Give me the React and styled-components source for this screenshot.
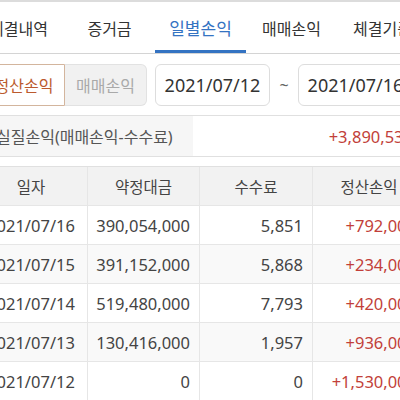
import React from "react";
import styled, { createGlobalStyle } from "styled-components";

const GlobalStyle = createGlobalStyle`
  html, body {
    margin: 0;
    padding: 0;
    background: #ffffff;
    overflow: hidden;
  }
  body {
    font-family: "Noto Sans", "Noto Sans CJK KR", sans-serif;
    color: #333333;
  }
`;

const Page = styled.div`
  width: 450px;
  margin-left: -25px;
  border-top: 2px solid #dcdcdc;
`;

const TabBar = styled.div`
  display: flex;
  height: 51px;
  margin-left: -2px;
  border-bottom: 1px solid #d4d4d4;
`;

const Tab = styled.div`
  flex: 0 0 91px;
  display: flex;
  align-items: center;
  justify-content: center;
  font-size: ${({ active }) => (active ? "17px" : "16px")};
  color: ${({ active }) => (active ? "#3473c2" : "#333333")};
  white-space: nowrap;
  box-shadow: ${({ active }) => (active ? "inset 0 -3px 0 #3473c2" : "none")};
`;

const FilterRow = styled.div`
  display: flex;
  align-items: center;
  height: 42px;
  margin-top: 10px;
  padding-left: 8px;
`;

const Segment = styled.div`
  display: flex;
  height: 42px;
  margin-right: 8px;
`;

const SegButton = styled.div`
  width: 82px;
  box-sizing: border-box;
  display: flex;
  align-items: center;
  justify-content: center;
  font-size: 16px;
  white-space: nowrap;
  color: ${({ selected }) => (selected ? "#bb5a2e" : "#a9a9a9")};
  background: ${({ selected }) => (selected ? "#ffffff" : "#f1f1f1")};
  border: 1px solid ${({ selected }) => (selected ? "#d3b59d" : "#e2e2e2")};
  border-radius: ${({ selected }) => (selected ? "6px 0 0 6px" : "0 6px 6px 0")};
  ${({ selected }) => (selected ? "" : "border-left: none;")}
`;

const DateBox = styled.div`
  width: 115px;
  height: 42px;
  box-sizing: border-box;
  flex: 0 0 auto;
  display: flex;
  align-items: center;
  justify-content: center;
  border: 1px solid #dddddd;
  border-radius: 6px;
  font-size: 18px;
  color: #333333;
  white-space: nowrap;
`;

const Tilde = styled.div`
  width: 28px;
  text-align: center;
  font-size: 16px;
  color: #666666;
`;

const Summary = styled.div`
  display: flex;
  height: 42px;
  margin-top: 9px;
  border-top: 1px solid #e0e0e0;
  border-bottom: 1px solid #e0e0e0;
  box-sizing: border-box;
`;

const SummaryLabel = styled.div`
  flex: 0 0 auto;
  width: 218px;
  padding-left: 21px;
  box-sizing: border-box;
  display: flex;
  align-items: center;
  background: #f6f6f6;
  font-size: 16px;
  color: #555555;
  white-space: nowrap;
`;

const SummaryValue = styled.div`
  flex: 1;
  display: flex;
  align-items: center;
  justify-content: flex-end;
  padding-right: 12px;
  font-size: 16.5px;
  color: #c23f3a;
`;

const Table = styled.div`
  margin-top: 9px;
  border-top: 1px solid #e0e0e0;
`;

const Row = styled.div`
  display: grid;
  grid-template-columns: 112px 112px 113px 113px;
  height: 39px;
  box-sizing: border-box;
  border-bottom: 1px solid #e6e6e6;
  background: ${({ head, striped }) => (head ? "#f2f2f2" : striped ? "#f9f9f9" : "#ffffff")};
`;

const Cell = styled.div`
  display: flex;
  align-items: center;
  justify-content: ${({ align }) => (align === "right" ? "flex-end" : "center")};
  padding-right: ${({ align }) => (align === "right" ? "9px" : "0")};
  border-left: ${({ first }) => (first ? "none" : "1px solid #e6e6e6")};
  font-size: ${({ head }) => (head ? "15.5px" : "16.5px")};
  color: ${({ red }) => (red ? "#c23f3a" : "#444444")};
  white-space: nowrap;
`;

const rows = [
  { date: "2021/07/16", amount: "390,054,000", fee: "5,851", profit: "+792,000" },
  { date: "2021/07/15", amount: "391,152,000", fee: "5,868", profit: "+234,000" },
  { date: "2021/07/14", amount: "519,480,000", fee: "7,793", profit: "+420,000" },
  { date: "2021/07/13", amount: "130,416,000", fee: "1,957", profit: "+936,000" },
  { date: "2021/07/12", amount: "0", fee: "0", profit: "+1,530,000" },
];

const tabs = ["체결내역", "증거금", "일별손익", "매매손익", "체결기준"];

export default function App() {
  return (
    <Page>
      <GlobalStyle />
      <TabBar>
        {tabs.map((t) => (
          <Tab key={t} active={t === "일별손익"}>
            {t}
          </Tab>
        ))}
      </TabBar>
      <FilterRow>
        <Segment>
          <SegButton selected>정산손익</SegButton>
          <SegButton>매매손익</SegButton>
        </Segment>
        <DateBox>2021/07/12</DateBox>
        <Tilde>~</Tilde>
        <DateBox>2021/07/16</DateBox>
      </FilterRow>
      <Summary>
        <SummaryLabel>실질손익(매매손익-수수료)</SummaryLabel>
        <SummaryValue>+3,890,530</SummaryValue>
      </Summary>
      <Table>
        <Row head>
          <Cell head first>일자</Cell>
          <Cell head>약정대금</Cell>
          <Cell head>수수료</Cell>
          <Cell head>정산손익</Cell>
        </Row>
        {rows.map((r, i) => (
          <Row key={r.date} striped={i % 2 === 1}>
            <Cell first>{r.date}</Cell>
            <Cell align="right">{r.amount}</Cell>
            <Cell align="right">{r.fee}</Cell>
            <Cell align="right" red>
              {r.profit}
            </Cell>
          </Row>
        ))}
      </Table>
    </Page>
  );
}
